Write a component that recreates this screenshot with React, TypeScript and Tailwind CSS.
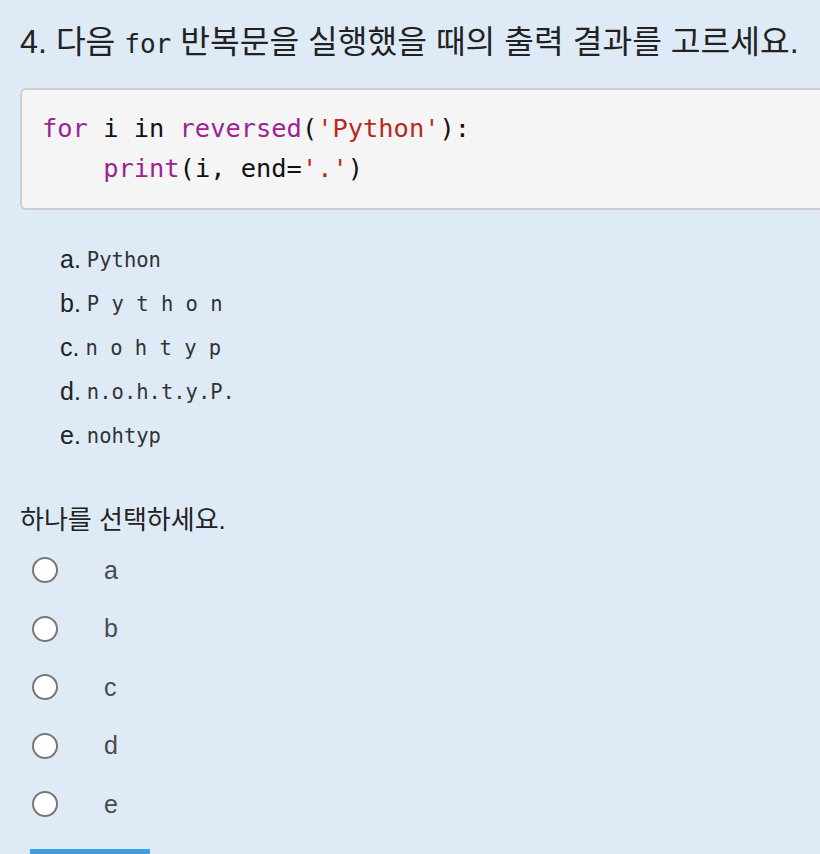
const options = [
  { key: "a", text: "Python" },
  { key: "b", text: "P y t h o n" },
  { key: "c", text: "n o h t y p" },
  { key: "d", text: "n.o.h.t.y.P." },
  { key: "e", text: "nohtyp" },
];

const sans = "font-['Liberation_Sans','Noto_Sans_CJK_KR',sans-serif]";
const mono = "font-['DejaVu_Sans_Mono','Liberation_Mono',monospace]";

const App = () => {
  return (
    <div className={`min-h-screen bg-[#deebf7] pl-5 pt-[22px] text-[#222] ${sans}`}>
      <h1 className="text-[32.3px] leading-[40px] whitespace-nowrap">
        4. 다음 <span className={`${mono} text-[26px]`}>for</span> 반복문을 실행했을 때의 출력 결과를 고르세요.
      </h1>

      <pre
        className={`mt-[24px] rounded-l-md border-2 border-r-0 border-[#cfcfcf] bg-[#f5f5f5] pl-5 pt-[18px] pb-[20px] text-[25.4px] leading-[40px] text-[#111] ${mono}`}
      >
        <span className="text-[#9b2393]">for</span> i in <span className="text-[#9b2393]">reversed</span>(
        <span className="text-[#b8281c]">'Python'</span>):
        {"\n    "}
        <span className="text-[#9b2393]">print</span>(i, end=<span className="text-[#b8281c]">'.'</span>)
      </pre>

      <ul className="mt-[28px] pl-10">
        {options.map((o) => (
          <li key={o.key} className="flex h-[44px] items-center">
            <span className="text-[25px] text-[#222]">{o.key}.</span>
            <span className={`ml-[6px] text-[20.5px] whitespace-pre text-[#333] ${mono}`}>{o.text}</span>
          </li>
        ))}
      </ul>

      <p className="mt-[44px] text-[26px] leading-[36px]">하나를 선택하세요.</p>

      <div className="mt-[3px] pl-3">
        {options.map((o) => (
          <label key={o.key} className="flex h-[58.5px] items-center">
            <span className="h-[26px] w-[26px] rounded-full border-2 border-[#777] bg-white" />
            <span className="ml-[46px] text-[25px] text-[#4a4a4a]">{o.key}</span>
          </label>
        ))}
      </div>

      <div className="mt-[15px] ml-[10px] h-[40px] w-[120px] bg-[#409de0]" />
    </div>
  );
};

export default App;
